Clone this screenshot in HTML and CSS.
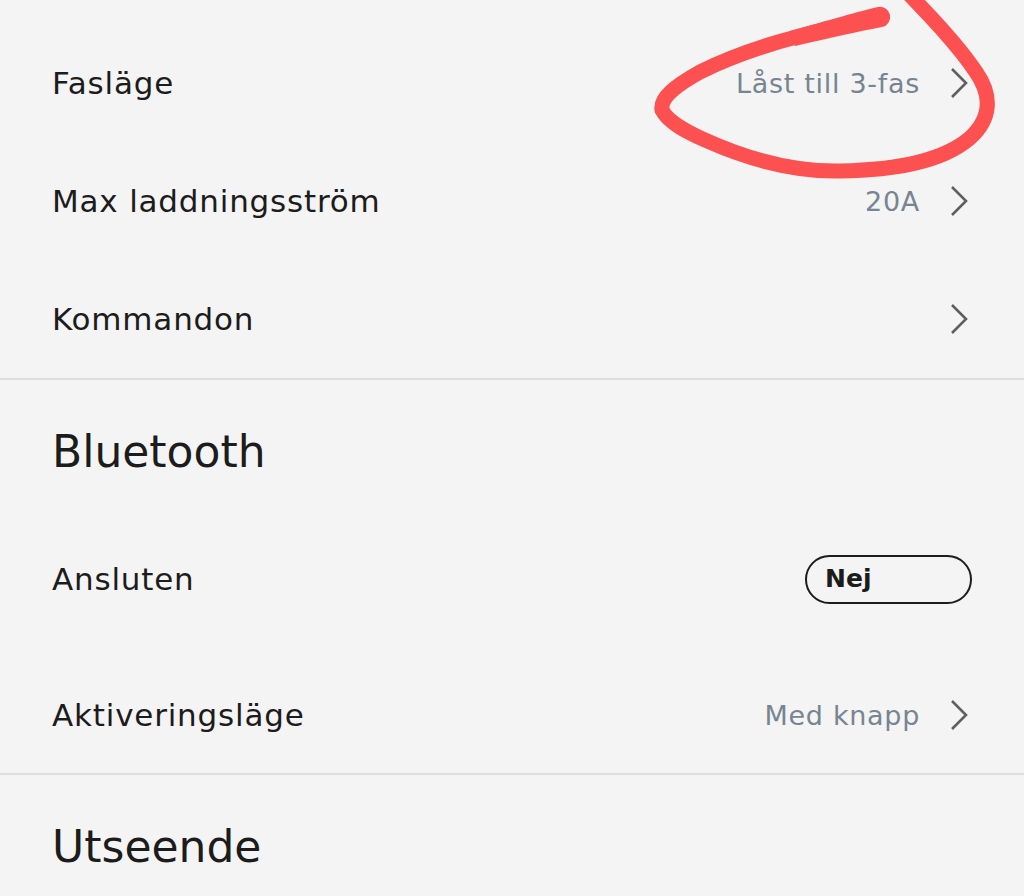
FILE: index.html
```html
<!DOCTYPE html>
<html lang="sv">
<head>
<meta charset="utf-8">
<link rel="stylesheet" href="styles.css">
</head>
<body>
<div class="page">
  <section class="group first">
    <div class="row">
      <span class="label">Fasläge</span>
      <span class="right"><span class="value">Låst till 3-fas</span><svg class="chev" viewBox="0 0 18 32"><path d="M2 2 L16 16 L2 30"/></svg></span>
    </div>
    <div class="row">
      <span class="label">Max laddningsström</span>
      <span class="right"><span class="value">20A</span><svg class="chev" viewBox="0 0 18 32"><path d="M2 2 L16 16 L2 30"/></svg></span>
    </div>
    <div class="row">
      <span class="label">Kommandon</span>
      <span class="right"><svg class="chev" viewBox="0 0 18 32"><path d="M2 2 L16 16 L2 30"/></svg></span>
    </div>
  </section>
  <section class="group">
    <h2 class="heading">Bluetooth</h2>
    <div class="row toggle-row">
      <span class="label">Ansluten</span>
      <span class="pill">Nej</span>
    </div>
    <div class="row after-toggle">
      <span class="label">Aktiveringsläge</span>
      <span class="right"><span class="value">Med knapp</span><svg class="chev" viewBox="0 0 18 32"><path d="M2 2 L16 16 L2 30"/></svg></span>
    </div>
  </section>
  <section class="group last">
    <h2 class="heading">Utseende</h2>
  </section>
  <svg class="scribble" viewBox="0 0 1024 896">
    <path d="M905 -10 C930 16 958 45 976 72 C992 95 992 118 970 138 C942 162 895 170 840 171 C790 172 745 158 705 140 C685 131 668 122 662 110 C660 98 675 86 700 72 C730 57 765 45 800 36 C830 28 860 20 880 16"/>
    <path class="tip" d="M790 31 C830 20 860 11 878 7 A10 10 0 0 1 882 27 C860 31 830 38 795 46 Z"/>
  </svg>
</div>
</body>
</html>
```
FILE: styles.css
```css
html, body {
  margin: 0;
  padding: 0;
  background: #f4f4f4;
}
body {
  font-family: "DejaVu Sans", "Noto Sans", sans-serif;
  color: #1c1c1c;
}
.page {
  position: relative;
  width: 1024px;
  height: 896px;
  overflow: hidden;
}
.group {
  border-bottom: 2px solid #dedede;
}
.group.first {
  padding-top: 24px;
}
.group.last {
  border-bottom: none;
}
.row {
  height: 118px;
  display: flex;
  align-items: center;
  justify-content: space-between;
  padding: 0 56px 0 52px;
}
.label {
  font-size: 31px;
  line-height: 40px;
  letter-spacing: 0.8px;
}
.right {
  display: flex;
  align-items: center;
  gap: 30px;
}
.value {
  font-size: 27px;
  color: #778592;
  letter-spacing: 0.7px;
}
.chev {
  width: 18px;
  height: 32px;
  fill: none;
  stroke: #5f5f5f;
  stroke-width: 2.6;
}
.heading {
  margin: 0;
  font-weight: 400;
  font-size: 44px;
  line-height: 60px;
  padding: 42px 52px 39px;
}
.toggle-row {
  height: 116px;
  padding-right: 52px;
}
.after-toggle {
  height: 116px;
  margin-top: 20px;
}
.pill {
  box-sizing: border-box;
  width: 167px;
  height: 49px;
  border: 2px solid #1c1c1c;
  border-radius: 25px;
  font-size: 25px;
  font-weight: 700;
  line-height: 44px;
  padding-left: 18px;
}
.scribble {
  position: absolute;
  left: 0;
  top: 0;
  width: 1024px;
  height: 896px;
  pointer-events: none;
}
.scribble path {
  fill: none;
  stroke: #fd5050;
  stroke-width: 15;
  stroke-linecap: round;
  stroke-linejoin: round;
}
.scribble path.tip {
  fill: #fd5050;
  stroke: none;
}
```
